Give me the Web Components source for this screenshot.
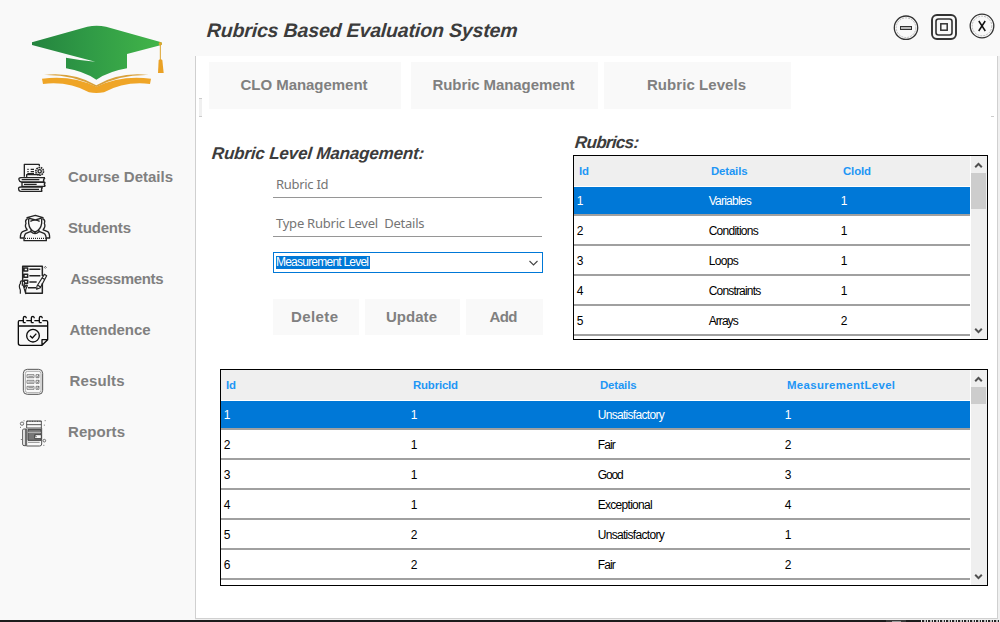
<!DOCTYPE html>
<html lang="en">
<head>
<meta charset="utf-8">
<title>Rubrics Based Evaluation System</title>
<style>
html,body{margin:0;width:1000px;height:622px;overflow:hidden;background:#f9f9f9;font-family:"Liberation Sans",Arial,sans-serif}
</style>
</head>
<body>
<rubric-app></rubric-app>
<script>
const define = (name, html, setup) => customElements.define(name, class extends HTMLElement {
  connectedCallback() {
    if (this.shadowRoot) return;
    const root = this.attachShadow({mode: 'open'});
    const t = document.createElement('template');
    t.innerHTML = typeof html === 'function' ? html(this) : html;
    root.append(t.content.cloneNode(true));
    if (setup) setup(this, root);
  }
});

/* A one-line label whose tracking is adjusted to reach the width in its "w" attribute. */
define('fit-label', `<style>:host{display:inline-block;white-space:pre}span{display:inline-block}</style><span><slot></slot></span>`, (el, root) => {
  const w = +el.getAttribute('w'), n = el.textContent.length;
  const s = root.querySelector('span');
  if (!w || n < 2) return;
  const gap = (w - s.getBoundingClientRect().width) / (n - 1);
  s.style.letterSpacing = gap.toFixed(3) + 'px';
  s.style.marginRight = (-gap).toFixed(3) + 'px';
});

define('app-logo', `<style>:host{display:block;height:151px}svg{display:block}</style>
<svg width="195" height="151" viewBox="0 0 585 453">
<defs><linearGradient id="g"><stop offset="0" stop-color="#24843f"/><stop offset=".45" stop-color="#309b46"/><stop offset="1" stop-color="#42b549"/></linearGradient></defs>
<path fill="url(#g)" d="M96 127 L262 80 Q290 74 318 80 L484 127 Q487 131 484 135 L381 162 V205 Q330 213 289 239 Q249 213 198 205 V173 Q240 181 286 185 L96 135Z"/>
<path fill="none" stroke="#dda32d" stroke-width="3" d="M481 130V180"/>
<circle cx="481" cy="131" r="5" fill="#e0a52c"/>
<path fill="#eaa125" d="M476 180Q482 175 487 180L491 219H474Z"/>
<path fill="#efa527" d="M126 236Q215 224 289 260Q364 224 453 236L450 252Q375 243 312 277Q289 281 267 277Q205 243 129 252Z"/>
<path fill="#d9a13a" d="M132 225Q220 215 289 256Q358 215 446 225Q360 223 289 261Q218 223 132 225Z"/>
</svg>`);

const icons = {
course: ['3', `<g stroke-width="4"><path d="M73 80V43H118M80 82V74H119M118 43V49M82 58H86M92 58H102M82 65H86M92 65H102M82 71H102"/><circle cx="119" cy="64" r="11.5" stroke-width="5" stroke-dasharray="5 2"/><circle cx="119" cy="64" r="5"/><path d="M135 83H63Q55 83 57 89Q58 95 64 96H132M65 89H118M135 83Q128 89 132 96M136 97H66V109H136M72 103H110M136 97Q130 103 136 109M128 111H63Q54 111 56 117Q56 124 63 124H127M64 118H117M128 111Q122 117 126 124"/></g>`],
students: ['156', `<g stroke-width="4"><path d="M81 203L106 196L129 203L106 210ZM86 207V220Q88 240 105 246Q122 240 125 220V207M91 214Q105 207 119 214M83 206Q74 211 78 220Q73 231 82 239M128 206Q137 211 133 220Q138 231 129 239M93 238V244L78 250Q72 254 72 272H139Q139 254 132 250L117 244V238M83 239L68 245Q61 249 61 264H71M128 239L143 245Q149 249 149 264H140M93 245Q105 256 117 245"/><path d="M75 265H137" stroke-dasharray="3 3"/></g>`],
assess: ['309', `<g stroke-width="4.5"><path d="M68 396V349H127V378M127 400V430H77M72 354H83V363H72ZM72 373H83V382H72ZM73 391H83V400H73ZM88 358H121M88 377H121M88 396H110M84 413H108"/><path d="M61 431V420Q55 407 61 401Q61 390 67 393V407M67 397Q73 389 74 399V412Q80 402 82 407L77 419V431Z" fill="#f9f9f9" stroke-width="3.5"/><path d="M133 373L140 377L121 413L110 418L111 408ZM126 383L133 388M113 405L121 411" stroke-width="3.5"/><path d="M136 349L139 352L136 355L133 352Z" stroke-width="2"/></g>`],
attend: ['12', `<g stroke-width="4" stroke="#0c0c0c"><path d="M70 62H58Q55 62 55 66V130Q55 136 61 136H126L143 119V66Q143 62 139 62H127M79 62H94M103 62H118M55 78H143M126 136V119H143"/><path d="M70 68V54Q70 49 75 49Q79 50 79 55M70 68H77M94 68V54Q94 49 99 49Q103 50 103 55M94 68H101M118 68V54Q118 49 123 49Q127 50 127 55M118 68H125"/><circle cx="99" cy="107" r="19"/><path d="M90 107L97 114L109 101"/></g>`],
results: ['165', `<g stroke="#555" stroke-width="3"><rect x="70" y="208" width="58" height="75" rx="12"/><rect x="76" y="214" width="47" height="64" rx="7" stroke-width="2" stroke="#888"/><path d="M81 224H102V233H81ZM108 224H117V233H108ZM81 241H102V250H81ZM108 241H117V250H108ZM81 259H102V268H81ZM108 259H117V268H108ZM85 229H99M85 246H99M85 263H99M110 229L113 231L117 224M110 246L113 248L117 241M110 263L113 265L117 258" stroke-width="2"/></g>`],
reports: ['318', `<g stroke="#555" stroke-width="3"><path d="M80 384V363H124V384M80 374H124M70 387H80V437H72Q68 437 68 432V390ZM80 384H125V432Q125 438 119 438H80M76 387V437"/><path d="M81 364H124" stroke-width="4" stroke-dasharray="3 2"/><rect x="84" y="388" width="39" height="33" fill="#777" stroke="#444"/><path d="M84 397H123" stroke="#bbb"/><rect x="104" y="404" width="20" height="12" fill="#f9f9f9" stroke="#444"/><path d="M106 404V410H111M84 427H119" stroke-width="2"/><circle cx="66" cy="371" r="5" stroke-width="2.5"/><circle cx="133" cy="422" r="4" stroke-width="2.5"/><path d="M60 382H63M72 364V361M134 362H137M133 374V377M64 417V420M130 436H133" stroke-width="2.5"/></g>`]
};
define('nav-item', el => {
  const [y, body] = icons[el.getAttribute('icon')];
  return `<style>:host{display:flex;height:51px;align-items:center;padding-left:10px;font:bold 15px/51px "Liberation Sans",Arial,sans-serif;color:#808080}
  svg{flex:none;width:50px;height:51px;margin-right:var(--gap,8px)}</style>
  <svg viewBox="30 ${y} 150 153" fill="none" stroke="#242424" stroke-linejoin="round">${body}</svg><slot></slot>`;
});

define('side-bar', `<style>:host{display:flex;flex-direction:column;width:195px;background:#f9f9f9}</style>
<app-logo></app-logo>
<nav-item icon="course"><fit-label w="105">Course Details</fit-label></nav-item>
<nav-item icon="students"><fit-label w="63">Students</fit-label></nav-item>
<nav-item icon="assess" style="--gap:10.5px"><fit-label w="93">Assessments</fit-label></nav-item>
<nav-item icon="attend" style="--gap:9.5px"><fit-label w="81">Attendence</fit-label></nav-item>
<nav-item icon="results" style="--gap:9.5px"><fit-label w="55">Results</fit-label></nav-item>
<nav-item icon="reports"><fit-label w="57">Reports</fit-label></nav-item>`);

define('window-buttons', `<style>:host{display:block;width:107px;height:56px}svg{display:block}</style>
<svg width="107" height="56" viewBox="893 0 107 56" fill="none" stroke="#333">
<circle cx="906" cy="27.7" r="11.7" stroke-width="1.3"/><circle cx="906" cy="27.7" r="9.8" stroke="#aaa" stroke-width=".8" stroke-dasharray="2 1"/>
<rect x="900.5" y="26.5" width="11" height="3" fill="#bbb" stroke="#333"/>
<rect x="932" y="15" width="24" height="24" rx="5" stroke-width="1.9"/><rect x="936" y="19" width="16" height="16" rx="2.5" stroke-width="1.6"/><rect x="940.8" y="23.8" width="6.4" height="6.4" stroke-width="1.5"/>
<circle cx="982" cy="26" r="11.8" stroke-width="1.3"/><circle cx="982" cy="26" r="9.8" stroke="#aaa" stroke-width=".8" stroke-dasharray="2 1"/>
<path d="M978.8 21L985.3 31M985.2 21L978.7 31" stroke="#111" stroke-width="1.5"/>
</svg>`);

define('title-bar', `<style>:host{display:flex;justify-content:space-between;height:56px;background:#f9f9f9}
.t{padding:0 0 0 12px;font:italic bold 19.5px/61px "Liberation Sans",Arial,sans-serif;color:#3c3c3c}.t fit-label{transform:skewX(-4deg)}</style>
<div class="t"><fit-label w="315">Rubrics Based Evaluation System</fit-label></div><window-buttons></window-buttons>`);

define('flat-button', `<style>:host{display:flex;justify-content:center;align-items:center;background:#f9f9f9;color:#808080;font:bold 15px/20px "Liberation Sans",Arial,sans-serif;box-sizing:border-box}</style><slot></slot>`);

define('tab-strip', `<style>:host{display:flex;padding:6px 3px 0 3px;height:54px;align-items:flex-start}
flat-button{height:47px;width:187px;padding:0 2px 2px 0}.a{width:192px;margin-left:7px}.b{margin-left:10px}.c{margin-left:6px}
i{width:3px;height:19px;margin-top:36px;box-sizing:border-box;background:#f0f0f0;border:solid #ccc;border-width:1px 0}
i.r{background:none;border-top:0;margin-left:auto}</style>
<i></i><flat-button class="a"><fit-label w="127">CLO Management</fit-label></flat-button>
<flat-button class="b"><fit-label w="142">Rubric Management</fit-label></flat-button>
<flat-button class="c"><fit-label w="99">Rubric Levels</fit-label></flat-button><i class="r"></i>`);

define('section-title', `<style>:host{display:block;height:20px;font:italic bold 17px/20px "Liberation Sans",Arial,sans-serif;color:#3c3c3c}slot{display:inline-block;transform:skewX(-5deg)}</style><slot></slot>`);

define('line-input', `<style>:host{display:block;box-sizing:border-box;width:269px;height:26px;padding-left:3px;border-bottom:1px solid #969696;color:#757575;font:13px/25px "Noto Sans","Open Sans",sans-serif}</style><slot></slot>`);

define('combo-box', `<style>:host{display:flex;justify-content:space-between;align-items:center;box-sizing:border-box;width:270px;height:21px;padding:0 3px 0 2px;border:1px solid #0078d7;background:#fff}
.s{height:13px;background:#0078d7;color:#fff;font:12px/13px "Liberation Sans",Arial,sans-serif;padding-right:1px;margin-bottom:1px}svg{display:block}</style>
<span class="s"><slot></slot></span><svg width="11" height="9" fill="none" stroke="#444" stroke-width="1.1"><path d="M1.5 3L5.5 7L9.5 3"/></svg>`);

define('level-form', `<style>:host{display:block;padding-left:62px}.a{margin-top:8px}.b{margin-top:13px}.c{margin-top:15px}.row{display:flex;gap:6px;margin-top:26px}flat-button{height:36px}</style>
<line-input class="a"><fit-label w="52.5">Rubric Id</fit-label></line-input>
<line-input class="b"><fit-label w="148.5">Type Rubric Level  Details</fit-label></line-input>
<combo-box class="c"><fit-label w="93">Measurement Level</fit-label></combo-box>
<div class="row"><flat-button style="width:86px;padding-right:3px"><fit-label w="47">Delete</fit-label></flat-button><flat-button style="width:95px;padding-right:2px"><fit-label w="51">Update</fit-label></flat-button><flat-button style="width:77px;padding-right:2px"><fit-label w="28">Add</fit-label></flat-button></div>`);

define('scroll-bar', `<style>:host{display:flex;flex-direction:column;width:16px;background:#efefef}.thumb{width:15px;height:var(--thumb);background:#cdcdcd}svg{display:block;flex:none}.sp{flex:1}</style>
<svg width="16" height="17" fill="none" stroke="#505050" stroke-width="2"><path d="M4.2 11.2L7.5 7.9L10.8 11.2"/></svg><div class="thumb"></div><div class="sp"></div>
<svg width="16" height="17" fill="none" stroke="#505050" stroke-width="2"><path d="M4.2 6.8L7.5 10.1L10.8 6.8"/></svg>`);

const tables = {
  rubrics: {cols: [['Id',10],['Details',36.5],['CloId',28]], col: 132, w: 415, h: 185, thumb: 36,
    rows: [['1',['Variables',43],'1'],['2',['Conditions',50],'1'],['3',['Loops',30],'1'],['4',['Constraints',52.5],'1'],['5',['Arrays',30],'2']]},
  levels: {cols: [['Id',10],['RubricId',45],['Details',36.5],['MeasurementLevel',108]], col: 187, w: 768, h: 217, thumb: 17,
    rows: [['1','1',['Unsatisfactory',67],'1'],['2','1',['Fair',18],'2'],['3','1',['Good',26],'3'],['4','1',['Exceptional',55],'4'],['5','2',['Unsatisfactory',67],'1'],['6','2',['Fair',18],'2']]}
};
define('data-grid', el => {
  const t = tables[el.getAttribute('data')];
  const lab = c => Array.isArray(c) ? `<fit-label w="${c[1]}">${c[0]}</fit-label>` : `<fit-label>${c}</fit-label>`;
  return `<style>:host{display:flex;box-sizing:border-box;width:${t.w}px;height:${t.h}px;border:1px solid #000;background:#fff;overflow:hidden}
  .body{flex:1;margin-right:1px}.r{display:grid;grid-template-columns:repeat(${t.cols.length - 1},${t.col}px) 1fr;height:27px;border-top:1px solid #fff;border-bottom:2px solid #a0a0a0;font:12px/28px "Liberation Sans",Arial,sans-serif;color:#000}
  .r>*{padding-left:2.7px}.h{height:30px;border:0;background:#efefef;color:#1e96f5;font:bold 11.4px/31px "Liberation Sans",Arial,sans-serif}.h>*{padding-left:5px}.sel{background:#0078d7;color:#fff}</style>
  <div class="body"><div class="r h">${t.cols.map(c => `<div>${lab(c)}</div>`).join('')}</div>${t.rows.map((r, i) => `<div class="r${i ? '' : ' sel'}">${r.map(c => `<div>${lab(c)}</div>`).join('')}</div>`).join('')}</div>
  <scroll-bar style="--thumb:${t.thumb}px"></scroll-bar>`;
});

define('level-page', `<style>:host{display:flex;flex-direction:column;box-sizing:border-box;height:563px;width:803px;border:solid #d0d0d0;border-width:0 1px 1px;background:#fff}
.top{display:flex;padding:17px 0 0 15px;height:236px;box-sizing:border-box}.left{width:362px;padding-top:11px}.grid2{margin:17px 0 0 24px}data-grid.g1{margin-top:2px}</style>
<tab-strip></tab-strip>
<div class="top"><div class="left"><section-title style="padding-left:1px"><fit-label w="214">Rubric Level Management:</fit-label></section-title><level-form></level-form></div>
<div><section-title style="padding-left:2px"><fit-label w="66">Rubrics:</fit-label></section-title><data-grid class="g1" data="rubrics"></data-grid></div></div>
<data-grid class="grid2" data="levels"></data-grid>`);

define('task-edge', `<style>:host{display:flex;height:2px;background:#1c1c1c}.a{margin-left:886px;width:20px;background:#3a3a3a;display:flex;justify-content:center}.a i{width:9px;height:1px;margin-top:1px;background:#999}.b{width:79px;margin-left:15px;background:repeating-linear-gradient(90deg,#eee 0 1px,#222 1px 3px,#bbb 3px 5px,#222 5px 6px)}</style><div class="a"><i></i></div><div class="b"></div>`);

define('rubric-app', `<style>:host{display:grid;grid-template:56px 563px 1px 2px/195px 805px;width:1000px;height:622px;background:#f0f0f0}
side-bar{grid-row:1/4}task-edge{grid-column:1/3}.gap{grid-column:2}</style>
<side-bar></side-bar><title-bar></title-bar><level-page></level-page><div class="gap"></div><task-edge></task-edge>`);
</script>
</body>
</html>
